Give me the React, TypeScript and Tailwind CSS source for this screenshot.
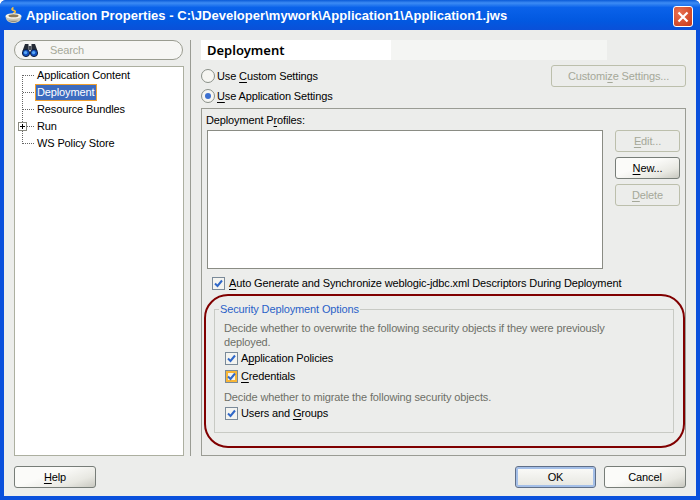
const uiFont = "font-['Liberation_Sans',sans-serif] text-[11px] leading-[14px] tracking-[-0.13px]";

function CoffeeIcon() {
	return (
		<svg width="17" height="17" viewBox="0 0 17 17" className="shrink-0">
			<path d="M8.5 .5C6 2 7 3 9 3.5S10.5 6 8 6.5" fill="none" stroke="#f4c040" strokeWidth="1.6" />
			<path d="M.5 9c0 4.500 3.500 7 8 7s8-2.500 8-7z" fill="#c9c6b8" />
			<path d="M3 13c1.500 1.500 3.500 2 5.500 2s3-.5 4.500-1.500c-3 .5-7 .5-10-.5z" fill="#8f8c80" />
			<ellipse cx="8.500" cy="9" rx="8" ry="2.800" fill="#f6f4ea" />
			<ellipse cx="8.500" cy="8.800" rx="5" ry="1.500" fill="#8a7a5a" />
		</svg>
	);
}

function Binoculars() {
	return (
		<svg width="16" height="14" viewBox="0 0 16 14" className="shrink-0">
			<path d="M3 1h3.500v7H.5zM9.500 1H13l2.500 7h-6z" fill="#252b36" />
			<rect x="6.500" y="3" width="3" height="4" fill="#4a505c" />
			<circle cx="4" cy="10" r="3.600" fill="#1250c0" stroke="#10203c" />
			<circle cx="12" cy="10" r="3.600" fill="#1250c0" stroke="#10203c" />
			<circle cx="3.600" cy="9.600" r="1.700" fill="#58a8f4" />
			<circle cx="11.600" cy="9.600" r="1.700" fill="#58a8f4" />
		</svg>
	);
}

function TreeLines() {
	return (
		<svg width="36" height="90" viewBox="0 0 36 90" className="absolute left-0 top-0">
			<path
				d="M7.5 8V77M8 8.500H19M8 25.500H19M8 42.500H19M8 59.500H19M8 76.500H19"
				fill="none"
				stroke="#666"
				strokeDasharray="1 1"
			/>
			<rect x="3.500" y="55.500" width="8" height="8" fill="#fff" stroke="#8a8a80" />
			<path d="M5 59.500h5M7.500 57v5" stroke="#000" />
		</svg>
	);
}

function CheckBox({ hot }: { hot?: boolean }) {
	return (
		<span
			className={`flex h-[13px] w-[13px] shrink-0 items-center justify-center border border-[#7a8a99] bg-[#f4f4f0] ${
				hot ? "shadow-[inset_0_0_0_2px_#f8b636]" : ""
			}`}
		>
			<svg width="9" height="9" viewBox="0 0 9 9">
				<path d="M1 4.500l2.500 2.500L8 1.500" fill="none" stroke="#3068c8" strokeWidth="2" />
			</svg>
		</span>
	);
}

function Radio({ on }: { on?: boolean }) {
	return (
		<span className="flex h-[14px] w-[14px] shrink-0 items-center justify-center rounded-full border border-[#8a9088] bg-[#f6f6f2]">
			{on && <span className="h-[6px] w-[6px] rounded-full bg-[#3c70d0]" />}
		</span>
	);
}

function Btn({
	children,
	className,
	disabled,
	primary,
}: {
	children: React.ReactNode;
	className?: string;
	disabled?: boolean;
	primary?: boolean;
}) {
	const look = disabled
		? "border-[#bcbfac] text-[#a5a899]"
		: primary
			? "border-[#5f6f88] bg-[linear-gradient(180deg,#fbfbf9,#e6e6e0)] text-black shadow-[inset_0_0_0_2px_#a4bfe8]"
			: "border-[#777d78] bg-[linear-gradient(160deg,#fbfbf9_40%,#e8e8e2_75%,#c8c8c0)] text-black";
	return (
		<div className={`flex h-[22px] shrink-0 items-center justify-center rounded-[3px] border ${look} ${className ?? ""}`}>
			<span>{children}</span>
		</div>
	);
}

export default function App() {
	return (
		<div className={`flex h-[500px] w-[700px] flex-col overflow-hidden rounded-t-[6px] bg-[#0a50dc] text-black ${uiFont}`}>
			{/* title bar */}
			<div className="flex h-[30px] shrink-0 items-center bg-[linear-gradient(180deg,#0a5ad8_0%,#3d8cf4_10%,#0a62ea_25%,#0258e0_70%,#0a50d8_100%)] pl-[5px] pr-[7px]">
				<CoffeeIcon />
				<span className="mt-[2px] ml-[4px] flex-1 font-['Liberation_Sans',sans-serif] text-[13px] font-bold tracking-[0.04px] whitespace-nowrap text-white">
					Application Properties - C:\JDeveloper\mywork\Application1\Application1.jws
				</span>
				<div className="mt-[3px] flex h-[21px] w-[20px] items-center justify-center rounded-[3px] border border-white bg-[radial-gradient(circle_at_30%_30%,#e87050,#c83818)]">
					<svg width="12" height="12" viewBox="0 0 12 12">
						<path d="M1.500 1.500l9 9M10.500 1.500l-9 9" stroke="#fff" strokeWidth="2.200" />
					</svg>
				</div>
			</div>

			<div className="relative mx-[4px] mb-[4px] flex flex-1 flex-col bg-[#ecedeb] pl-[10px] pr-[10px]">
				<div className="flex h-[426px] pt-[10px]">
					{/* left nav */}
					<div className="flex w-[170px] shrink-0 flex-col">
						<div className="flex h-[20px] w-[169px] items-center rounded-full border border-[#9a9c90] bg-[#f6f6f4] pl-[7px]">
							<Binoculars />
							<span className="ml-[12px] text-[#a5a899]">Search</span>
						</div>
						<div className="relative mt-[6px] flex-1 border border-[#acafa0] bg-white pl-[22px]">
							<TreeLines />
							<div className="h-[17px] leading-[17px]">Application Content</div>
							<div className="-ml-[2px] h-[17px] w-[62px] border border-[#f0a030] bg-[#3d6bbf] pl-[1px] leading-[15px] text-white">
								Deployment
							</div>
							<div className="h-[17px] leading-[17px]">Resource Bundles</div>
							<div className="h-[17px] leading-[17px]">Run</div>
							<div className="h-[17px] leading-[17px]">WS Policy Store</div>
						</div>
					</div>

					{/* splitter */}
					<div className="ml-[6px] w-px shrink-0 bg-[#9a9c94]" />

					{/* right panel */}
					<div className="ml-[10px] flex min-w-0 flex-1 flex-col">
						<div className="flex h-[20px] w-[406px] shrink-0 bg-[#f4f5f3]">
							<div className="w-[190px] bg-white pl-[6px] font-['Noto_Sans',sans-serif] text-[13px] leading-[20px] font-semibold tracking-normal">
								Deployment
							</div>
						</div>

						<div className="mt-[5px] flex h-[22px] shrink-0 items-center">
							<Radio />
							<span className="ml-[2px] flex-1">
								Use <u className="underline-offset-2">C</u>ustom Settings
							</span>
							<Btn disabled className="w-[135px]">
								Customi<u className="underline-offset-2">z</u>e Settings...
							</Btn>
						</div>
						<div className="flex h-[18px] shrink-0 items-center">
							<Radio on />
							<span className="ml-[2px]">
								<u className="underline-offset-2">U</u>se Application Settings
							</span>
						</div>

						<div className="relative mt-[3px] flex-1 border border-[#9a9c94] px-[5px] pt-[4px]">
							<div className="-ml-px h-[17px]">
								Deployment P<u className="underline-offset-2">r</u>ofiles:
							</div>
							<div className="flex h-[139px]">
								<div className="w-[396px] border border-[#8a8c84] bg-white" />
								<div className="ml-[12px] flex w-[65px] flex-col gap-[5px]">
									<Btn disabled>
										<u className="underline-offset-2">E</u>dit...
									</Btn>
									<Btn>
										<u className="underline-offset-2">N</u>ew...
									</Btn>
									<Btn disabled>
										<u className="underline-offset-2">D</u>elete
									</Btn>
								</div>
							</div>

							<div className="mt-[7px] ml-[5px] flex h-[14px] items-center gap-[4px]">
								<CheckBox />
								<span>
									<u className="underline-offset-2">A</u>uto Generate and Synchronize weblogic-jdbc.xml Descriptors During Deployment
								</span>
							</div>

							{/* security group */}
							<div className="relative mt-[19px] ml-[7px] h-[124px] w-[460px] border border-[#c8cac4] pt-[11px] pl-[9px]">
								<span className="absolute -top-[8px] left-[4px] bg-[#ecedeb] px-[1px] text-[#2a62c8]">
									Security Deployment Options
								</span>
								<div className="w-[420px] text-[#6e7068]">
									Decide whether to overwrite the following security objects if they were previously deployed.
								</div>
								<div className="flex h-[18px] items-center gap-[3px] pl-[1px]">
									<CheckBox />
									<span>
										A<u className="underline-offset-2">p</u>plication Policies
									</span>
								</div>
								<div className="flex h-[18px] items-center gap-[3px] pl-[1px]">
									<CheckBox hot />
									<span>
										<u className="underline-offset-2">C</u>redentials
									</span>
								</div>
								<div className="mt-[5px] text-[#6e7068]">Decide whether to migrate the following security objects.</div>
								<div className="flex h-[18px] items-center gap-[3px] pl-[1px]">
									<CheckBox />
									<span>
										Users and <u className="underline-offset-2">G</u>roups
									</span>
								</div>
							</div>

							{/* hand-drawn annotation */}
							<div className="absolute top-[185px] left-[2px] h-[154px] w-[481px] rounded-[24px] border-2 border-[#800000]" />
						</div>
					</div>
				</div>

				{/* footer */}
				<div className="mt-[10px] flex items-center">
					<Btn className="w-[82px]">
						<u className="underline-offset-2">H</u>elp
					</Btn>
					<div className="flex-1" />
					<Btn primary className="w-[81px]">
						OK
					</Btn>
					<Btn className="ml-[8px] w-[82px]">Cancel</Btn>
				</div>
			</div>
		</div>
	);
}
